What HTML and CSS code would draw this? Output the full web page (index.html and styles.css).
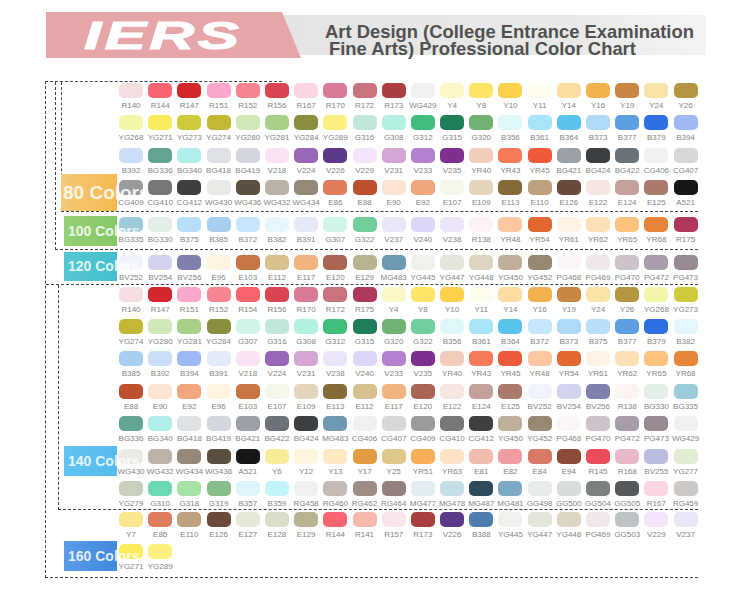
FILE: index.html
```html
<!DOCTYPE html>
<html lang="en">
<head>
<meta charset="utf-8">
<title>IERS Professional Color Chart</title>
<link rel="stylesheet" href="styles.css">
</head>
<body>
<header class="banner">
  <div class="brand"><span class="logo">IERS</span></div>
  <h1 class="title"><span>Art Design (College Entrance Examination</span><span class="l2">Fine Arts) Professional Color Chart</span></h1>
</header>
<main class="chart">
  <section class="upper">
    <div class="topline"></div>
    <div class="box100">
      <div class="box80">
        <div class="row"><div class="slot"></div><div class="cells">
          <div class="c R140">R140</div><div class="c R144">R144</div><div class="c R147">R147</div><div class="c R151">R151</div><div class="c R152">R152</div><div class="c R156">R156</div><div class="c R167">R167</div><div class="c R170">R170</div><div class="c R172">R172</div><div class="c R173">R173</div><div class="c WG429">WG429</div><div class="c Y4">Y4</div><div class="c Y8">Y8</div><div class="c Y10">Y10</div><div class="c Y11">Y11</div><div class="c Y14">Y14</div><div class="c Y16">Y16</div><div class="c Y19">Y19</div><div class="c Y24">Y24</div><div class="c Y26">Y26</div>
        </div></div>
        <div class="row"><div class="slot"></div><div class="cells">
          <div class="c YG268">YG268</div><div class="c YG271">YG271</div><div class="c YG273">YG273</div><div class="c YG274">YG274</div><div class="c YG280">YG280</div><div class="c YG281">YG281</div><div class="c YG284">YG284</div><div class="c YG289">YG289</div><div class="c G316">G316</div><div class="c G308">G308</div><div class="c G312">G312</div><div class="c G315">G315</div><div class="c G320">G320</div><div class="c B356">B356</div><div class="c B361">B361</div><div class="c B364">B364</div><div class="c B373">B373</div><div class="c B377">B377</div><div class="c B379">B379</div><div class="c B394">B394</div>
        </div></div>
        <div class="row"><div class="slot"></div><div class="cells">
          <div class="c B392">B392</div><div class="c BG336">BG336</div><div class="c BG340">BG340</div><div class="c BG418">BG418</div><div class="c BG419">BG419</div><div class="c V218">V218</div><div class="c V224">V224</div><div class="c V226">V226</div><div class="c V229">V229</div><div class="c V231">V231</div><div class="c V233">V233</div><div class="c V235">V235</div><div class="c YR40">YR40</div><div class="c YR43">YR43</div><div class="c YR45">YR45</div><div class="c BG421">BG421</div><div class="c BG424">BG424</div><div class="c BG422">BG422</div><div class="c CG406">CG406</div><div class="c CG407">CG407</div>
        </div></div>
        <div class="row"><div class="slot"><span class="tag t80">80 Colors</span></div><div class="cells">
          <div class="c CG409">CG409</div><div class="c CG410">CG410</div><div class="c CG412">CG412</div><div class="c WG430">WG430</div><div class="c WG436">WG436</div><div class="c WG432">WG432</div><div class="c WG434">WG434</div><div class="c E86">E86</div><div class="c E88">E88</div><div class="c E90">E90</div><div class="c E92">E92</div><div class="c E107">E107</div><div class="c E109">E109</div><div class="c E113">E113</div><div class="c E110">E110</div><div class="c E126">E126</div><div class="c E122">E122</div><div class="c E124">E124</div><div class="c E125">E125</div><div class="c A521">A521</div>
        </div></div>
      </div>
      <div class="row r100"><div class="slot"><span class="tag t100">100 Colors</span></div><div class="cells">
        <div class="c BG335">BG335</div><div class="c BG330">BG330</div><div class="c B375">B375</div><div class="c B385">B385</div><div class="c B372">B372</div><div class="c B382">B382</div><div class="c B391">B391</div><div class="c G307">G307</div><div class="c G322">G322</div><div class="c V237">V237</div><div class="c V240">V240</div><div class="c V238">V238</div><div class="c R138">R138</div><div class="c YR48">YR48</div><div class="c YR54">YR54</div><div class="c YR61">YR61</div><div class="c YR62">YR62</div><div class="c YR65">YR65</div><div class="c YR68">YR68</div><div class="c R175">R175</div>
      </div></div>
    </div>
    <div class="row r120"><div class="slot"><span class="tag t120">120 Colors</span></div><div class="cells">
      <div class="c BV252">BV252</div><div class="c BV254">BV254</div><div class="c BV256">BV256</div><div class="c E96">E96</div><div class="c E103">E103</div><div class="c E112">E112</div><div class="c E117">E117</div><div class="c E120">E120</div><div class="c E129">E129</div><div class="c MG483">MG483</div><div class="c YG445">YG445</div><div class="c YG447">YG447</div><div class="c YG448">YG448</div><div class="c YG450">YG450</div><div class="c YG452">YG452</div><div class="c PG468">PG468</div><div class="c PG469">PG469</div><div class="c PG470">PG470</div><div class="c PG472">PG472</div><div class="c PG473">PG473</div>
    </div></div>
  </section>
  <section class="lower">
    <div class="box140">
      <div class="row"><div class="slot"></div><div class="cells">
        <div class="c R140">R140</div><div class="c R147">R147</div><div class="c R151">R151</div><div class="c R152">R152</div><div class="c R154">R154</div><div class="c R156">R156</div><div class="c R170">R170</div><div class="c R172">R172</div><div class="c R175">R175</div><div class="c Y4">Y4</div><div class="c Y8">Y8</div><div class="c Y10">Y10</div><div class="c Y11">Y11</div><div class="c Y14">Y14</div><div class="c Y16">Y16</div><div class="c Y19">Y19</div><div class="c Y24">Y24</div><div class="c Y26">Y26</div><div class="c YG268">YG268</div><div class="c YG273">YG273</div>
      </div></div>
      <div class="row"><div class="slot"></div><div class="cells">
        <div class="c YG274">YG274</div><div class="c YG280">YG280</div><div class="c YG281">YG281</div><div class="c YG284">YG284</div><div class="c G307">G307</div><div class="c G316">G316</div><div class="c G308">G308</div><div class="c G312">G312</div><div class="c G315">G315</div><div class="c G320">G320</div><div class="c G322">G322</div><div class="c B356">B356</div><div class="c B361">B361</div><div class="c B364">B364</div><div class="c B372">B372</div><div class="c B373">B373</div><div class="c B375">B375</div><div class="c B377">B377</div><div class="c B379">B379</div><div class="c B382">B382</div>
      </div></div>
      <div class="row"><div class="slot"></div><div class="cells">
        <div class="c B385">B385</div><div class="c B392">B392</div><div class="c B394">B394</div><div class="c B391">B391</div><div class="c V218">V218</div><div class="c V224">V224</div><div class="c V231">V231</div><div class="c V238">V238</div><div class="c V240">V240</div><div class="c V233">V233</div><div class="c V235">V235</div><div class="c YR40">YR40</div><div class="c YR43">YR43</div><div class="c YR45">YR45</div><div class="c YR48">YR48</div><div class="c YR54">YR54</div><div class="c YR61">YR61</div><div class="c YR62">YR62</div><div class="c YR65">YR65</div><div class="c YR68">YR68</div>
      </div></div>
      <div class="row"><div class="slot"></div><div class="cells">
        <div class="c E88">E88</div><div class="c E90">E90</div><div class="c E92">E92</div><div class="c E96">E96</div><div class="c E103">E103</div><div class="c E107">E107</div><div class="c E109">E109</div><div class="c E113">E113</div><div class="c E112">E112</div><div class="c E117">E117</div><div class="c E120">E120</div><div class="c E122">E122</div><div class="c E124">E124</div><div class="c E125">E125</div><div class="c BV252">BV252</div><div class="c BV254">BV254</div><div class="c BV256">BV256</div><div class="c R138">R138</div><div class="c BG330">BG330</div><div class="c BG335">BG335</div>
      </div></div>
      <div class="row"><div class="slot"></div><div class="cells">
        <div class="c BG336">BG336</div><div class="c BG340">BG340</div><div class="c BG418">BG418</div><div class="c BG419">BG419</div><div class="c BG421">BG421</div><div class="c BG422">BG422</div><div class="c BG424">BG424</div><div class="c MG483">MG483</div><div class="c CG406">CG406</div><div class="c CG407">CG407</div><div class="c CG409">CG409</div><div class="c CG410">CG410</div><div class="c CG412">CG412</div><div class="c YG450">YG450</div><div class="c YG452">YG452</div><div class="c PG468">PG468</div><div class="c PG470">PG470</div><div class="c PG472">PG472</div><div class="c PG473">PG473</div><div class="c WG429">WG429</div>
      </div></div>
      <div class="row"><div class="slot"><span class="tag t140">140 Colors</span></div><div class="cells">
        <div class="c WG430">WG430</div><div class="c WG432">WG432</div><div class="c WG434">WG434</div><div class="c WG436">WG436</div><div class="c A521">A521</div><div class="c Y6">Y6</div><div class="c Y12">Y12</div><div class="c Y13">Y13</div><div class="c Y17">Y17</div><div class="c Y25">Y25</div><div class="c YR51">YR51</div><div class="c YR63">YR63</div><div class="c E81">E81</div><div class="c E82">E82</div><div class="c E84">E84</div><div class="c E94">E94</div><div class="c R145">R145</div><div class="c R168">R168</div><div class="c BV255">BV255</div><div class="c YG277">YG277</div>
      </div></div>
      <div class="row"><div class="slot"></div><div class="cells">
        <div class="c YG279">YG279</div><div class="c G310">G310</div><div class="c G318">G318</div><div class="c G319">G319</div><div class="c B357">B357</div><div class="c B359">B359</div><div class="c RG458">RG458</div><div class="c RG460">RG460</div><div class="c RG462">RG462</div><div class="c RG464">RG464</div><div class="c MG477">MG477</div><div class="c MG478">MG478</div><div class="c MG487">MG487</div><div class="c MG481">MG481</div><div class="c GG498">GG498</div><div class="c GG500">GG500</div><div class="c GG504">GG504</div><div class="c GG505">GG505</div><div class="c R167">R167</div><div class="c RG459">RG459</div>
      </div></div>
    </div>
    <div class="s160">
      <div class="row"><div class="slot"></div><div class="cells">
        <div class="c Y7">Y7</div><div class="c E86">E86</div><div class="c E110">E110</div><div class="c E126">E126</div><div class="c E127">E127</div><div class="c E128">E128</div><div class="c E129">E129</div><div class="c R144">R144</div><div class="c R141">R141</div><div class="c R157">R157</div><div class="c R173">R173</div><div class="c V226">V226</div><div class="c B388">B388</div><div class="c YG445">YG445</div><div class="c YG447">YG447</div><div class="c YG448">YG448</div><div class="c PG469">PG469</div><div class="c GG503">GG503</div><div class="c V229">V229</div><div class="c V237">V237</div>
      </div></div>
      <div class="row"><div class="slot"><span class="tag t160">160 Colors</span></div><div class="cells">
        <div class="c YG271">YG271</div><div class="c YG289">YG289</div>
      </div></div>
    </div>
  </section>
</main>
</body>
</html>
```

FILE: styles.css
```css
* { box-sizing: border-box; }
html, body { margin: 0; padding: 0; background: #fff; }
body { width: 750px; font-family: "Liberation Sans", Arial, sans-serif; }

/* ---------- banner ---------- */
.banner {
  display: flex;
  margin: 15px 0 0 46px;
  width: 660px;
  height: 40px;
  background: linear-gradient(90deg, #e1e1e1 0%, #e9e9e9 80%, #f4f4f4 100%);
}
.brand {
  flex: none;
  width: 255px;
  height: 46px;
  margin: -3px 0;
  padding-left: 38px;
  display: flex;
  align-items: center;
  background: #e6a5a9;
  clip-path: polygon(0 0, 236px 0, 100% 100%, 0 100%);
}
.logo {
  display: block;
  font: italic 700 39px/1 "Liberation Sans", Arial, sans-serif;
  color: #fff;
  letter-spacing: 2px;
  -webkit-text-stroke: 1px #fff;
  transform: scaleX(1.6);
  transform-origin: left center;
}
.title {
  align-self: flex-start;
  margin: 8px 0 0 24px;
  font: 700 18.4px/17px "Liberation Sans", Arial, sans-serif;
  color: #515151;
}
.title span { display: block; white-space: nowrap; }
.title .l2 { padding-left: 4px; }

/* ---------- chart frame ---------- */
.chart {
  margin: 26px 0 0 45px;
  width: 653px;
  border-left: 1px dashed #444;
  border-bottom: 1px dashed #444;
  --slot: 73px;
}
.topline { width: 237px; margin-left: -1px; border-top: 1px dashed #444; }
.upper { border-bottom: 1px dashed #444; padding-bottom: 1.3px; }
.box100 {
  margin-left: 9px;
  border-left: 1px dashed #444;
  border-bottom: 1px dashed #444;
  padding-bottom: 4.5px;
  --slot: 63px;
}
.box80 {
  margin-left: 5px;
  border-left: 1px dashed #444;
  border-bottom: 1px dashed #444;
  padding: 1px 0 3px;
  display: flex;
  flex-direction: column;
  gap: 4.4px;
  --slot: 57px;
}
.r100 { margin-top: 4.5px; }
.r120 { margin-top: 4.8px; }
.box140 {
  margin-left: 12px;
  border-left: 1px dashed #444;
  border-bottom: 1px dashed #444;
  padding-top: 1.4px;
  display: flex;
  flex-direction: column;
  gap: 4.4px;
  --slot: 60px;
}
.s160 {
  margin-top: 1.6px;
  padding-bottom: 5px;
  display: flex;
  flex-direction: column;
  gap: 4.4px;
}

/* ---------- rows ---------- */
.row { display: flex; height: 28px; }
.slot { flex: none; width: var(--slot); position: relative; z-index: 2; }
.cells {
  display: grid;
  grid-template-columns: repeat(20, 24px);
  column-gap: 5.2px;
}
.c {
  width: 24px;
  display: flex;
  flex-direction: column;
  align-items: center;
  font: 8px/10px "Liberation Sans", Arial, sans-serif;
  color: #858585;
  white-space: nowrap;
}
.c::before {
  content: "";
  flex: none;
  width: 24px;
  height: 15px;
  margin-bottom: 3px;
  border-radius: 5px;
  background: var(--c);
}

/* ---------- series tags ---------- */
.tag {
  display: block;
  width: 53px;
  height: 30px;
  margin-top: -3px;
  margin-left: 18px;
  padding-left: 4px;
  font: 700 14px/30px "Liberation Sans", Arial, sans-serif;
  color: rgba(255, 255, 255, 0.86);
  white-space: nowrap;
}
.t80 {
  width: 56px; height: 37px; line-height: 37px;
  margin-top: -6px; margin-left: -1px; padding-left: 2px;
  font-size: 19px;
  background: linear-gradient(90deg, #f3c97a, #f7b950);
}
.t100 { margin-top: -1px; margin-left: 8px; background: linear-gradient(90deg, #93cf74, #86c765); }
.t120 { height: 29px; line-height: 29px; background: linear-gradient(90deg, #55c7d2, #45bfcb); }
.t140 { margin-left: 5px; background: linear-gradient(90deg, #62c3f1, #55bcee); }
.t160 { background: linear-gradient(90deg, #5a9ce7, #4288dd); }

/* ---------- marker colours ---------- */
.R138{--c:#fcf3f3}.R140{--c:#f6dde0}.R141{--c:#f5b9ae}.R144{--c:#f8646f}.R145{--c:#eb4d58}
.R147{--c:#d3262a}.R151{--c:#f9a7cb}.R152{--c:#f8858f}.R154{--c:#f8626b}.R156{--c:#db4551}
.R157{--c:#f9e5ec}.R167{--c:#fbd5e3}.R168{--c:#e8b9c9}.R170{--c:#d97a96}.R172{--c:#c97380}
.R173{--c:#aa3f3e}.R175{--c:#b0385a}
.WG429{--c:#f1f1ef}.WG430{--c:#eaeae6}.WG432{--c:#bab3a7}.WG434{--c:#938879}.WG436{--c:#5b4f40}
.Y4{--c:#fdf7c8}.Y6{--c:#f8ec9b}.Y7{--c:#fbe58e}.Y8{--c:#fee568}.Y10{--c:#fdd14c}.Y11{--c:#fefcec}
.Y12{--c:#fff6dd}.Y13{--c:#fee9c5}.Y14{--c:#fddca2}.Y16{--c:#f0b14e}.Y17{--c:#e39c43}.Y19{--c:#c78641}
.Y24{--c:#fae3a8}.Y25{--c:#dec98a}.Y26{--c:#b49641}
.YG268{--c:#f3f8a8}.YG271{--c:#faec5c}.YG273{--c:#cdca3b}.YG274{--c:#c4b736}.YG277{--c:#e2edd5}
.YG279{--c:#c8d1c0}.YG280{--c:#cfe8b5}.YG281{--c:#a8d089}.YG284{--c:#898f3e}.YG289{--c:#fbf07f}
.YG445{--c:#f2f0ea}.YG447{--c:#e5e6db}.YG448{--c:#dcd5c1}.YG450{--c:#bdb099}.YG452{--c:#968871}
.G307{--c:#d0f5ea}.G308{--c:#b2f0e2}.G310{--c:#6dd8b4}.G312{--c:#40be7c}.G315{--c:#1f7e58}
.G316{--c:#c0e8d8}.G318{--c:#a7e3a4}.G319{--c:#86bf8b}.G320{--c:#70b271}.G322{--c:#73ce9d}
.B356{--c:#dff9fb}.B357{--c:#ddf5fa}.B359{--c:#c4f4fb}.B361{--c:#a8e5f8}.B364{--c:#5bc4ee}
.B372{--c:#c5e7fd}.B373{--c:#aedaf8}.B375{--c:#b7dffa}.B377{--c:#5c9ee0}.B379{--c:#2e6fe2}
.B382{--c:#e7f6fd}.B385{--c:#a7cfef}.B388{--c:#4e7ead}.B391{--c:#e4ebf8}.B392{--c:#ccddf8}.B394{--c:#9db9f4}
.BG330{--c:#e2f0e5}.BG335{--c:#9cccda}.BG336{--c:#63a593}.BG340{--c:#b0eeea}.BG418{--c:#dee1e6}
.BG419{--c:#d3d7dd}.BG421{--c:#9ba1a6}.BG422{--c:#6c7378}.BG424{--c:#3c3f42}
.V218{--c:#fbe3f5}.V224{--c:#9a66b8}.V226{--c:#5a3a88}.V229{--c:#f5e5fb}.V231{--c:#d4a5d5}
.V233{--c:#b580d0}.V235{--c:#7e3090}.V237{--c:#ebe6f8}.V238{--c:#ede6fa}.V240{--c:#ded6f8}
.YR40{--c:#f3cdbc}.YR43{--c:#f77b59}.YR45{--c:#ee5b3a}.YR48{--c:#fdc7a0}.YR51{--c:#f8ae56}
.YR54{--c:#e36830}.YR61{--c:#fef3e5}.YR62{--c:#fde0b5}.YR63{--c:#fde4c8}.YR65{--c:#fdc27d}.YR68{--c:#e68437}
.CG406{--c:#f1f1f1}.CG407{--c:#d7d7d7}.CG409{--c:#9a9b9d}.CG410{--c:#777777}.CG412{--c:#3f3f41}
.E81{--c:#f2bdaf}.E82{--c:#ef9ba2}.E84{--c:#d97a68}.E86{--c:#de7c5b}.E88{--c:#be4f2f}.E90{--c:#fde5d4}
.E92{--c:#f2a67e}.E94{--c:#8c4a38}.E96{--c:#fef4df}.E103{--c:#c97443}.E107{--c:#f6f6eb}.E109{--c:#e3d5bc}
.E110{--c:#bfa17e}.E112{--c:#d6c18f}.E113{--c:#856b37}.E117{--c:#f1b380}.E120{--c:#a86653}.E122{--c:#f6e7e2}
.E124{--c:#c4a19c}.E125{--c:#a87b6c}.E126{--c:#6b4a3c}.E127{--c:#e6e8d8}.E128{--c:#dcddc8}.E129{--c:#b7b391}
.A521{--c:#161617}
.BV252{--c:#f0f4fc}.BV254{--c:#d2d3ed}.BV255{--c:#b9bde0}.BV256{--c:#7f80ae}
.MG477{--c:#e2eef2}.MG478{--c:#c5dde4}.MG481{--c:#7ea9c2}.MG483{--c:#6d9ab2}.MG487{--c:#2f4a5c}
.PG468{--c:#faf6f8}.PG469{--c:#f1e8eb}.PG470{--c:#cdc3cd}.PG472{--c:#a89dab}.PG473{--c:#968a95}
.RG458{--c:#f1f1f0}.RG459{--c:#cdcac6}.RG460{--c:#c5bab6}.RG462{--c:#9e8d86}.RG464{--c:#967f7f}
.GG498{--c:#e6edea}.GG500{--c:#d6dcd9}.GG503{--c:#bec4c5}.GG504{--c:#7d8081}.GG505{--c:#56595b}
```
